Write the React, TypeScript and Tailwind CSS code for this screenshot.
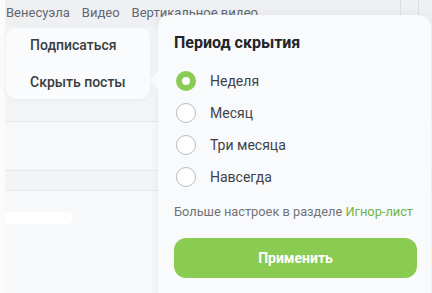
import { useState } from 'react';

const periods = ['Неделя', 'Месяц', 'Три месяца', 'Навсегда'];

export default function App() {
  const [period, setPeriod] = useState('Неделя');

  return (
    <div
      className="relative w-[432px] h-[293px] overflow-hidden bg-[#f7f8fa]"
      style={{ fontFamily: 'Roboto, "Noto Sans", sans-serif' }}
    >
      {/* page behind the menus */}
      <div className="flex h-full">
        <div className="w-[5px] bg-[#fbfbfc]" />
        <div className="flex flex-1 flex-col">
          <div className="flex h-[27px] items-start bg-[#eff0f2]">
            <div className="flex flex-1 gap-[12px] pt-[3px] pl-[1px] text-[13px] text-[#626873]">
              <span>Венесуэла</span>
              <span>Видео</span>
              <span>Вертикальное видео</span>
            </div>
            <div className="h-[15px] w-[19px] border-x border-[#dcdee2]" />
            <div className="w-[13px]" />
          </div>
          <div className="h-[95px] bg-[#f4f5f7] border-b border-[#e6e8eb]" />
          <div className="h-[49px] border-b border-[#e6e8eb]" />
          <div className="h-[20px] bg-[#f3f4f6] border-b border-[#e6e8eb]" />
          <div className="mt-[21px] h-[12px] w-[68px] rounded-r-full bg-white" />
        </div>
      </div>

      {/* post menu */}
      <div className="absolute left-[6px] top-[28px] flex h-[71px] w-[144px] flex-col justify-center gap-[16px] rounded-[10px] bg-[#fafbfc] pl-[24px] text-[14px] font-medium text-[#3a3d42] shadow-[0_2px_8px_rgba(0,0,0,0.04)]">
        <span>Подписаться</span>
        <span>Скрыть посты</span>
      </div>

      {/* hide period popover */}
      <div className="absolute left-[158px] top-[15px] h-[300px] w-[273px] rounded-[12px] bg-[#f9fafc] px-[16px] pt-[18px] shadow-[0_0_10px_rgba(0,0,0,0.06)]">
        <div className="absolute -left-[6px] top-[59px] h-[12px] w-[12px] rotate-45 bg-[#f9fafc]" />
        <h3 className="text-[16px] font-bold leading-[20px] text-[#222428]">Период скрытия</h3>
        <div className="mt-[18px] flex flex-col gap-[12px]">
          {periods.map((p) => (
            <button
              key={p}
              onClick={() => setPeriod(p)}
              className="flex h-[20px] items-center gap-[14px] pl-[2px] text-[14px] text-[#404349]"
            >
              {period === p ? (
                <span className="h-[20px] w-[20px] rounded-full border-[6px] border-[#8acb52] bg-white" />
              ) : (
                <span className="h-[20px] w-[20px] rounded-full border border-[#b5b8bd] bg-white" />
              )}
              <span>{p}</span>
            </button>
          ))}
        </div>
        <p className="mt-[17px] whitespace-nowrap text-[12.8px] leading-[15px] text-[#707479]">
          Больше настроек в разделе <span className="text-[#6fb545]">Игнор-лист</span>
        </p>
        <button className="mt-[19px] h-[40px] w-[243px] rounded-[12px] bg-[#8acb52] text-[14px] font-bold text-white">
          Применить
        </button>
      </div>
    </div>
  );
}
